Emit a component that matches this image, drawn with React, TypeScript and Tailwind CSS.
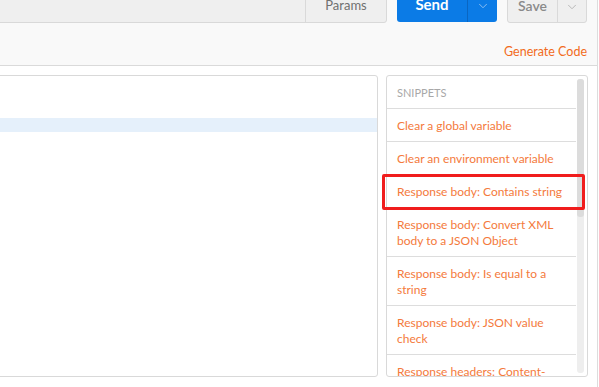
import { ChevronDown } from 'lucide-react';

const snippets = [
  "Clear a global variable",
  "Clear an environment variable",
  "Response body: Contains string",
  "Response body: Convert XML body to a JSON Object",
  "Response body: Is equal to a string",
  "Response body: JSON value check",
  "Response headers: Content-Type header check",
];

export default function App() {
  return (
    <div className="w-[598px] h-[387px] overflow-hidden bg-white border-r border-[#dddddd] text-[#505050]" style={{ fontFamily: "Lato, 'Liberation Sans', sans-serif" }}>
      {/* request bar */}
      <div className="flex flex-col h-[66px] bg-[#f9f9f9] border-b border-[#dadada]">
        <div className="flex items-start -mt-[14px]">
          <div className="flex w-[388px] h-[37px] -ml-[1px] bg-[#efefef] border border-[#d9d9d9] rounded-r-[3px]">
            <div className="flex-1" />
            <button className="w-[81px] border-l border-[#d9d9d9] text-[13px] text-[#707070] pt-[2px]">Params</button>
          </div>
          <div className="flex ml-[10px] w-[100px] h-[36px] bg-[#0b7be6] rounded-[3px] text-white">
            <button className="w-[70px] text-[15px] font-bold pt-[1px]">Send</button>
            <div className="flex-1 flex items-center justify-center border-l border-[#0a66c2] pt-[4px]">
              <ChevronDown size={14} strokeWidth={1.5} className="text-[#9cc6f2]" />
            </div>
          </div>
          <div className="flex ml-[10px] w-[80px] h-[37px] bg-[#efefef] border border-[#d9d9d9] rounded-[3px] text-[#8a8a8a]">
            <button className="w-[49px] text-[14px] font-semibold pt-[1px]">Save</button>
            <div className="flex-1 flex items-center justify-center border-l border-[#d9d9d9] pt-[4px]">
              <ChevronDown size={14} strokeWidth={1.5} className="text-[#b0b0b0]" />
            </div>
          </div>
        </div>
        <div className="mt-[21px] h-[16px] leading-[16px] text-right pr-[10px] text-[12.5px] text-[#f26b21]">Generate Code</div>
      </div>

      {/* panels */}
      <div className="flex pt-[9px] gap-[8px]">
        <div className="w-[382px] -ml-[4px] h-[302px] border border-[#d9d9d9] rounded-r-[3px]">
          <div className="mt-[42px] h-[14px] bg-[#e5f0fb]" />
        </div>
        <div className="w-[202px] h-[302px] border border-[#d9d9d9] rounded-[3px] flex overflow-y-clip overflow-x-visible">
          <div className="w-[189px] text-[12px] leading-[16px]">
            <div className="px-[10px] pt-[9px] pb-[7px] border-b border-[#dddddd] text-[11px] text-[#a8a8a8]">SNIPPETS</div>
            {snippets.map((s, i) => (
              <div key={s} className="relative px-[10px] pt-[9px] pb-[7px] border-b border-[#dddddd] text-[#f47a3c]">
                {s}
                {i === 2 && (
                  <div className="absolute -left-[5px] -right-[9px] -top-[1px] -bottom-[3px] border-[3px] border-[#f01d1d] rounded-[2px]" />
                )}
              </div>
            ))}
          </div>
          <div className="ml-[1px] mt-[3px] w-[7px] h-[294px] rounded-[3px] bg-[#eeeeee]">
            <div className="h-[138px] rounded-[3px] bg-[#dcdcdc]" />
          </div>
        </div>
      </div>
    </div>
  );
}
